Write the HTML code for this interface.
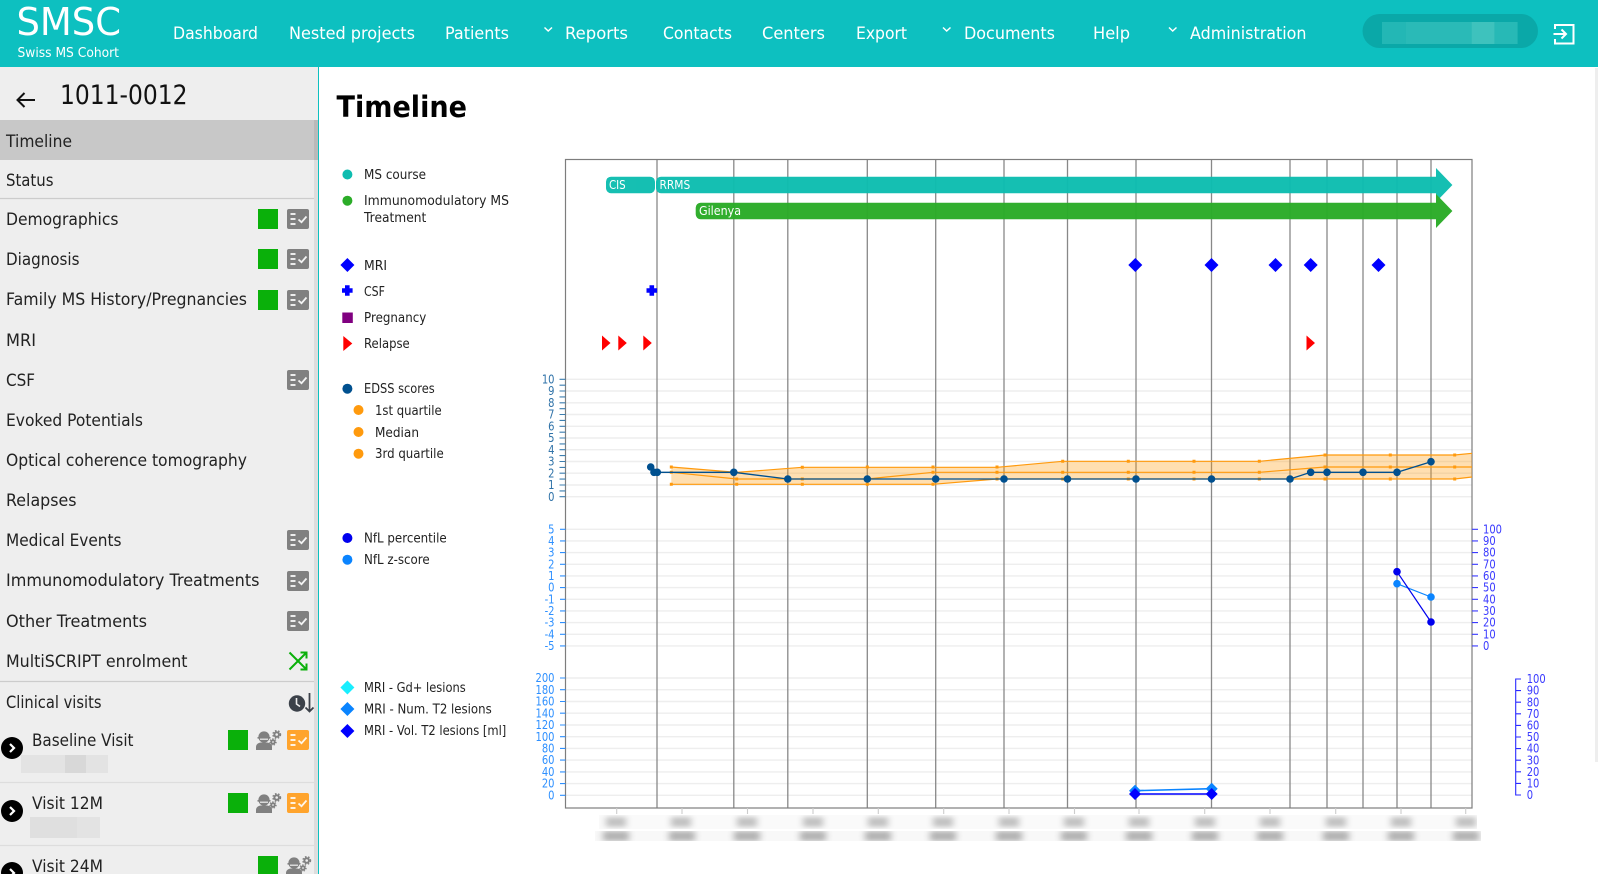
<!DOCTYPE html>
<html lang="en">
<head>
<meta charset="utf-8">
<title>SMSC Timeline</title>
<style>
html,body{margin:0;padding:0;width:1598px;height:874px;overflow:hidden;background:#fff;font-family:"DejaVu Sans","Liberation Sans",sans-serif}
header{position:absolute;left:0;top:0;width:1598px;height:67px;background:#0dc0c0}
aside{position:absolute;left:0;top:67px;width:318px;height:807px;background:#eee;border-right:1.5px solid #0dc0c0}
main{position:absolute;left:0;top:0;width:1598px;height:874px}
svg{position:absolute;left:0;top:0;overflow:visible}
.thumb{position:absolute;left:1595px;top:68px;width:3px;height:694px;background:#eee}
</style>
</head>
<body>
<main>
<svg width="1598" height="874" viewBox="0 0 1598 874" font-family="'DejaVu Sans','Liberation Sans',sans-serif">
<defs>
<filter id="b" x="-20%" y="-100%" width="140%" height="300%"><feGaussianBlur stdDeviation="3.5 2.5"/></filter>
<clipPath id="r1"><rect x="599" y="815" width="878" height="14"/></clipPath>
<clipPath id="r2"><rect x="595" y="831" width="886" height="10"/></clipPath>
</defs>
<text x="336.500" y="117" font-size="29.500" font-weight="700" fill="#000" textLength="130.500" lengthAdjust="spacingAndGlyphs">Timeline</text>

<!-- legend -->
<g font-size="13" fill="#222">
<circle cx="347.400" cy="174.500" r="5" fill="#0ebdb0"/><text x="364" y="179" textLength="62" lengthAdjust="spacingAndGlyphs">MS course</text>
<circle cx="347.400" cy="200.700" r="5" fill="#2bac28"/><text x="364" y="205" textLength="145" lengthAdjust="spacingAndGlyphs">Immunomodulatory MS</text><text x="364" y="222" textLength="62.300" lengthAdjust="spacingAndGlyphs">Treatment</text>
<path d="M347.400 258l7 7-7 7-7-7z" fill="#00f"/><text x="364" y="270" textLength="23" lengthAdjust="spacingAndGlyphs">MRI</text>
<path d="M345 285.500h4.600v3h3v4.600h-3v3H345v-3h-3v-4.600h3z" fill="#00f" transform="translate(0 -0.300)"/><text x="364" y="296" textLength="21" lengthAdjust="spacingAndGlyphs">CSF</text>
<rect x="342.300" y="312.500" width="10.500" height="10.500" fill="#800080"/><text x="364" y="322" textLength="62.300" lengthAdjust="spacingAndGlyphs">Pregnancy</text>
<path d="M343.300 336l9 7.500-9 7.500z" fill="#f00"/><text x="364" y="348" textLength="45.700" lengthAdjust="spacingAndGlyphs">Relapse</text>
<circle cx="347.400" cy="388.700" r="5" fill="#00508f"/><text x="364" y="393" textLength="70.700" lengthAdjust="spacingAndGlyphs">EDSS scores</text>
<circle cx="358.500" cy="410" r="5" fill="#ff9a0d"/><text x="375" y="415" textLength="66.700" lengthAdjust="spacingAndGlyphs">1st quartile</text>
<circle cx="358.500" cy="432" r="5" fill="#ff9a0d"/><text x="375" y="437" textLength="44" lengthAdjust="spacingAndGlyphs">Median</text>
<circle cx="358.500" cy="453.700" r="5" fill="#ff9a0d"/><text x="375" y="458" textLength="68.700" lengthAdjust="spacingAndGlyphs">3rd quartile</text>
<circle cx="347.400" cy="538" r="5" fill="#0000ee"/><text x="364" y="542.500" textLength="82.700" lengthAdjust="spacingAndGlyphs">NfL percentile</text>
<circle cx="347.400" cy="559.700" r="5" fill="#0a84ff"/><text x="364" y="564" textLength="65.700" lengthAdjust="spacingAndGlyphs">NfL z-score</text>
<path d="M347.400 680.500l7 7-7 7-7-7z" fill="#19eeff"/><text x="364" y="692" textLength="101.700" lengthAdjust="spacingAndGlyphs">MRI - Gd+ lesions</text>
<path d="M347.400 702l7 7-7 7-7-7z" fill="#0a84ff"/><text x="364" y="713.700" textLength="127.700" lengthAdjust="spacingAndGlyphs">MRI - Num. T2 lesions</text>
<path d="M347.400 724l7 7-7 7-7-7z" fill="#00f"/><text x="364" y="735" textLength="142.300" lengthAdjust="spacingAndGlyphs">MRI - Vol. T2 lesions [ml]</text>
</g>

<!-- gridlines -->
<g stroke="#eee" stroke-width="1.400">
<path d="M566 379.300H1472M566 391H1472M566 402.800H1472M566 414.500H1472M566 426.300H1472M566 438H1472M566 449.700H1472M566 461.500H1472M566 473.200H1472M566 485H1472M566 496.700H1472"/>
<path d="M566 529.300H1472M566 540.900H1472M566 552.600H1472M566 564.300H1472M566 575.900H1472M566 587.600H1472M566 599.300H1472M566 610.900H1472M566 622.600H1472M566 634.300H1472M566 645.900H1472"/>
<path d="M566 678H1472M566 689.700H1472M566 701.500H1472M566 713.200H1472M566 725H1472M566 736.700H1472M566 748.400H1472M566 760.100H1472M566 771.900H1472M566 783.600H1472M566 795.300H1472"/>
</g>

<!-- vertical lines -->
<g stroke="#888" stroke-width="1.300" fill="none">
<path d="M657 160V808M733.800 160V808M787.800 160V808M867.300 160V808M935.700 160V808M1004 160V808M1067.500 160V808M1136 160V808M1211.500 160V808M1290 160V808M1327 160V808M1363 160V808M1397 160V808M1431 160V808"/>
</g>

<!-- chart box -->
<rect x="565.500" y="159.500" width="906.500" height="648.500" fill="none" stroke="#7d7d7d" stroke-width="1.200"/>

<!-- course bars -->
<g opacity=".97">
<rect x="606" y="176.700" width="49" height="16.500" rx="5" fill="#0ebdb0"/>
<path d="M661 176.700H1436V168L1452.400 185 1436 202V193.200H661a5 5 0 0 1-5-5V181.700a5 5 0 0 1 5-5z" fill="#0ebdb0"/>
<path d="M700.700 202.700H1436V194L1452.400 211 1436 228V219.300H700.700a5 5 0 0 1-5-5V207.700a5 5 0 0 1 5-5z" fill="#2bac28"/>
</g>
<g font-size="12" fill="#fff">
<text x="609" y="189" textLength="16.700" lengthAdjust="spacingAndGlyphs">CIS</text>
<text x="659.500" y="189" textLength="30.700" lengthAdjust="spacingAndGlyphs">RRMS</text>
<text x="699" y="215" textLength="42" lengthAdjust="spacingAndGlyphs">Gilenya</text>
</g>

<!-- event markers -->
<g fill="#00f">
<path d="M1135.300 258l7 7-7 7-7-7zM1211.500 258l7 7-7 7-7-7zM1275.500 258l7 7-7 7-7-7zM1310.700 258l7 7-7 7-7-7zM1378.500 258l7 7-7 7-7-7z"/>
<path d="M649.500 285.500h4.600v3h3v4.600h-3v3h-4.600v-3h-3v-4.600h3z" transform="translate(0 -0.300)"/>
</g>
<path d="M602 335.500l8.500 7.500-8.500 7.500zM618.300 335.500l8.500 7.500-8.500 7.500zM643.300 335.500l8.500 7.500-8.500 7.500zM1306.500 335.500l8.500 7.500-8.500 7.500z" fill="#f00"/>

<!-- EDSS axis -->
<path d="M559.500 379.300H565.500M559.500 385.200H565.500M559.500 391H565.500M559.500 396.900H565.500M559.500 402.800H565.500M559.500 408.700H565.500M559.500 414.500H565.500M559.500 420.400H565.500M559.500 426.300H565.500M559.500 432.200H565.500M559.500 438H565.500M559.500 443.900H565.500M559.500 449.700H565.500M559.500 455.600H565.500M559.500 461.500H565.500M559.500 467.400H565.500M559.500 473.200H565.500M559.500 479.100H565.500M559.500 485H565.500M559.500 490.900H565.500M559.500 496.700H565.500" stroke="#3d7fb0" stroke-width="1.100"/>
<g transform="translate(554.500 -0.500) scale(.83 1)" text-anchor="end" font-size="12" fill="#2f72a8">
<text y="384">10</text><text y="395.600">9</text><text y="407.400">8</text><text y="419.100">7</text><text y="430.900">6</text><text y="442.600">5</text><text y="454.300">4</text><text y="466.100">3</text><text y="477.800">2</text><text y="489.600">1</text><text y="501.300">0</text>
</g>

<!-- NfL axes -->
<path d="M560 529.300H565.500M560 540.900H565.500M560 552.600H565.500M560 564.300H565.500M560 575.900H565.500M560 587.600H565.500M560 599.300H565.500M560 610.900H565.500M560 622.600H565.500M560 634.300H565.500M560 645.900H565.500" stroke="#2e90ff" stroke-width="1.100"/>
<g transform="translate(554.500 -0.500) scale(.83 1)" text-anchor="end" font-size="12" fill="#2e90ff">
<text y="534">5</text><text y="545.500">4</text><text y="557.200">3</text><text y="568.900">2</text><text y="580.500">1</text><text y="592.200">0</text><text y="603.900">-1</text><text y="615.500">-2</text><text y="627.200">-3</text><text y="638.900">-4</text><text y="650.500">-5</text>
</g>
<path d="M1472 529.300H1478M1472 540.900H1478M1472 552.600H1478M1472 564.300H1478M1472 575.900H1478M1472 587.600H1478M1472 599.300H1478M1472 610.900H1478M1472 622.600H1478M1472 634.300H1478M1472 645.900H1478" stroke="#3a3aff" stroke-width="1.100"/>
<g transform="translate(1483 -0.500) scale(.83 1)" font-size="12" fill="#3a3aff">
<text y="533.800">100</text><text y="545.500">90</text><text y="557.200">80</text><text y="568.900">70</text><text y="580.500">60</text><text y="592.200">50</text><text y="603.900">40</text><text y="615.500">30</text><text y="627.200">20</text><text y="638.900">10</text><text y="650.500">0</text>
</g>

<!-- MRI axes -->
<path d="M560 678H565.500M560 689.700H565.500M560 701.500H565.500M560 713.200H565.500M560 725H565.500M560 736.700H565.500M560 748.400H565.500M560 760.100H565.500M560 771.900H565.500M560 783.600H565.500M560 795.300H565.500" stroke="#2e90ff" stroke-width="1.100"/>
<g transform="translate(554.500 -0.500) scale(.83 1)" text-anchor="end" font-size="12" fill="#2e90ff">
<text y="682.600">200</text><text y="694.300">180</text><text y="706.100">160</text><text y="717.800">140</text><text y="729.600">120</text><text y="741.300">100</text><text y="753">80</text><text y="764.700">60</text><text y="776.500">40</text><text y="788.200">20</text><text y="799.900">0</text>
</g>
<path d="M1521 679H1515.700V795H1521M1515.700 690.600H1521M1515.700 702.200H1521M1515.700 713.800H1521M1515.700 725.400H1521M1515.700 737H1521M1515.700 748.600H1521M1515.700 760.200H1521M1515.700 771.800H1521M1515.700 783.400H1521" stroke="#2a2aff" stroke-width="1.100" fill="none"/>
<g transform="translate(1526.700 -0.500) scale(.83 1)" font-size="12" fill="#3a3aff">
<text y="683.600">100</text><text y="695.200">90</text><text y="706.800">80</text><text y="718.400">70</text><text y="730">60</text><text y="741.600">50</text><text y="753.200">40</text><text y="764.800">30</text><text y="776.400">20</text><text y="788">10</text><text y="799.600">0</text>
</g>

<!-- x ticks and blurred labels -->
<path d="M616.700 808v6M682 808v6M747.500 808v6M813 808v6M878.300 808v6M943.700 808v6M1009 808v6M1074.500 808v6M1139 808v6M1204.700 808v6M1270 808v6M1335.700 808v6M1401 808v6M1465.700 808v6" stroke="#ccc" stroke-width="1.100"/>
<rect x="599" y="815" width="878" height="14" fill="#fafafa"/>
<rect x="595" y="831" width="886" height="10" fill="#f8f8f8"/>
<g clip-path="url(#r1)"><g filter="url(#b)" fill="#c2c2c2">
<rect x="606" y="817" width="20" height="10"/><rect x="671" y="817" width="20" height="10"/><rect x="737" y="817" width="20" height="10"/><rect x="803" y="817" width="20" height="10"/><rect x="868" y="817" width="20" height="10"/><rect x="933" y="817" width="20" height="10"/><rect x="999" y="817" width="20" height="10"/><rect x="1064" y="817" width="20" height="10"/><rect x="1129" y="817" width="20" height="10"/><rect x="1195" y="817" width="20" height="10"/><rect x="1260" y="817" width="20" height="10"/><rect x="1326" y="817" width="20" height="10"/><rect x="1391" y="817" width="20" height="10"/><rect x="1456" y="817" width="20" height="10"/>
</g></g>
<g clip-path="url(#r2)"><g filter="url(#b)" fill="#b4b4b4">
<rect x="603" y="831" width="26" height="10"/><rect x="669" y="831" width="26" height="10"/><rect x="734" y="831" width="26" height="10"/><rect x="800" y="831" width="26" height="10"/><rect x="865" y="831" width="26" height="10"/><rect x="930" y="831" width="26" height="10"/><rect x="996" y="831" width="26" height="10"/><rect x="1061" y="831" width="26" height="10"/><rect x="1126" y="831" width="26" height="10"/><rect x="1192" y="831" width="26" height="10"/><rect x="1257" y="831" width="26" height="10"/><rect x="1323" y="831" width="26" height="10"/><rect x="1388" y="831" width="26" height="10"/><rect x="1453" y="831" width="26" height="10"/>
</g></g>

<!-- quartile band -->
<path d="M671.300 467L736.700 472.400 802.300 467.300H997L1062.700 461.300H1259.300L1325 455H1454.700L1472 453.300V477L1454.700 479H997L933 484.300H671.300Z" fill="#ff9a0d" fill-opacity=".32"/>
<g fill="none" stroke="#ff9a0d" stroke-width="1.200">
<path d="M671.300 467L736.700 472.400 802.300 467.300H997L1062.700 461.300H1259.300L1325 455H1454.700L1472 453.300"/>
<path d="M671.300 472.300L736.700 479H867L933 472.300H1259.300L1325 467H1472"/>
<path d="M671.300 484.300H933L997 479H1454.700L1472 477"/>
</g>
<g fill="#ff9a0d">
<path d="M669.800 465.500h3v3h-3zM669.800 470.800h3v3h-3zM669.800 482.800h3v3h-3zM735.200 477.500h3v3h-3zM735.200 482.800h3v3h-3zM800.800 465.800h3v3h-3zM800.800 477.500h3v3h-3zM800.800 482.800h3v3h-3zM865.800 465.500h3v3h-3zM865.800 477.500h3v3h-3zM865.800 482.800h3v3h-3zM931.500 465.500h3v3h-3zM931.500 470.800h3v3h-3zM931.500 482.800h3v3h-3zM995.500 465.500h3v3h-3zM995.500 470.800h3v3h-3zM995.500 477.500h3v3h-3zM1061.200 459.800h3v3h-3zM1061.200 470.800h3v3h-3zM1061.200 477.500h3v3h-3zM1126.800 459.800h3v3h-3zM1126.800 470.800h3v3h-3zM1126.800 477.500h3v3h-3zM1192.500 459.800h3v3h-3zM1192.500 470.800h3v3h-3zM1192.500 477.500h3v3h-3zM1257.800 459.800h3v3h-3zM1257.800 470.800h3v3h-3zM1257.800 477.500h3v3h-3zM1323.500 453.500h3v3h-3zM1323.500 465.500h3v3h-3zM1323.500 477.500h3v3h-3zM1388.800 453.500h3v3h-3zM1388.800 465.500h3v3h-3zM1388.800 477.500h3v3h-3zM1453.200 453.500h3v3h-3zM1453.200 465.500h3v3h-3zM1453.200 477.500h3v3h-3z"/>
</g>

<!-- EDSS line -->
<path d="M650.700 467L654 472.300H733.800L787.800 479H1290L1310.700 472.300H1397L1431 461.700" fill="none" stroke="#00508f" stroke-width="1.300"/>
<g fill="#00508f">
<circle cx="650.700" cy="467" r="3.800"/><circle cx="654" cy="472.300" r="3.800"/><circle cx="657.300" cy="472.300" r="3.800"/><circle cx="733.800" cy="472.300" r="3.800"/><circle cx="787.800" cy="479" r="3.800"/><circle cx="867.300" cy="479" r="3.800"/><circle cx="935.700" cy="479" r="3.800"/><circle cx="1004" cy="479" r="3.800"/><circle cx="1067.500" cy="479" r="3.800"/><circle cx="1136" cy="479" r="3.800"/><circle cx="1211.500" cy="479" r="3.800"/><circle cx="1290" cy="479" r="3.800"/><circle cx="1310.700" cy="472.300" r="3.800"/><circle cx="1327" cy="472.300" r="3.800"/><circle cx="1363" cy="472.300" r="3.800"/><circle cx="1397" cy="472.300" r="3.800"/><circle cx="1431" cy="461.700" r="3.800"/>
</g>

<!-- NfL series -->
<path d="M1397 583.700L1431 597" fill="none" stroke="#0a84ff" stroke-width="1.200"/>
<path d="M1397 571.700L1431 622" fill="none" stroke="#0000ee" stroke-width="1.200"/>
<circle cx="1397" cy="583.700" r="3.800" fill="#0a84ff"/><circle cx="1431" cy="597" r="3.800" fill="#0a84ff"/>
<circle cx="1397" cy="571.700" r="3.800" fill="#0000ee"/><circle cx="1431" cy="622" r="3.800" fill="#0000ee"/>

<!-- MRI series -->
<path d="M1135 790.700L1211.700 788.700" stroke="#0a84ff" stroke-width="1.600" fill="none"/>
<path d="M1135 794H1211.700" stroke="#00f" stroke-width="1.600" fill="none"/>
<path d="M1135 784.700l6 6-6 6-6-6zM1211.700 782.700l6 6-6 6-6-6z" fill="#0a84ff"/>
<path d="M1135 788l6 6-6 6-6-6zM1211.700 788l6 6-6 6-6-6z" fill="#00f"/>
</svg>
<div class="thumb"></div>
</main>

<header>
<svg width="1598" height="67" viewBox="0 0 1598 67" font-family="'DejaVu Sans','Liberation Sans',sans-serif" fill="#fff">
<text x="16.500" y="35" font-size="38.500" textLength="104.500" lengthAdjust="spacingAndGlyphs">SMSC</text>
<text x="17.500" y="57" font-size="13.700" textLength="101.500" lengthAdjust="spacingAndGlyphs">Swiss MS Cohort</text>
<g font-size="17.300">
<text x="173" y="39" textLength="85" lengthAdjust="spacingAndGlyphs">Dashboard</text>
<text x="289" y="39" textLength="126" lengthAdjust="spacingAndGlyphs">Nested projects</text>
<text x="445" y="39" textLength="64" lengthAdjust="spacingAndGlyphs">Patients</text>
<text x="565" y="39" textLength="63" lengthAdjust="spacingAndGlyphs">Reports</text>
<text x="663" y="39" textLength="69" lengthAdjust="spacingAndGlyphs">Contacts</text>
<text x="762" y="39" textLength="63" lengthAdjust="spacingAndGlyphs">Centers</text>
<text x="856" y="39" textLength="51" lengthAdjust="spacingAndGlyphs">Export</text>
<text x="964" y="39" textLength="91" lengthAdjust="spacingAndGlyphs">Documents</text>
<text x="1093" y="39" textLength="37" lengthAdjust="spacingAndGlyphs">Help</text>
<text x="1190" y="39" textLength="116.500" lengthAdjust="spacingAndGlyphs">Administration</text>
</g>
<path d="M544.500 27.500L548.200 31 552 27.500M943 27.500L946.700 31 950.500 27.500M1169 27.500L1172.700 31 1176.500 27.500" fill="none" stroke="#fff" stroke-width="1.500"/>
<rect x="1362.500" y="14" width="175.500" height="34" rx="17" fill="#0aa8a8"/>
<rect x="1382" y="22" width="23.600" height="22" fill="#23b7b5"/>
<rect x="1405.600" y="22" width="66" height="22" fill="#2abab7"/>
<rect x="1471.600" y="22" width="23" height="22" fill="#3ec2bd"/>
<rect x="1494.600" y="22" width="23" height="22" fill="#27b9b6"/>
<path d="M1555 29V25h18.500v18.500H1555V39" fill="none" stroke="#fff" stroke-width="2"/>
<path d="M1553.500 34H1566M1561.500 29.500L1566 34 1561.500 38.500" fill="none" stroke="#fff" stroke-width="2"/>
</svg>
</header>

<aside>
<svg width="318" height="807" viewBox="0 67 318 807" font-family="'DejaVu Sans','Liberation Sans',sans-serif" fill="#222">
<defs>
<g id="chk">
<rect width="22" height="20" rx="2"/>
<path d="M3.500 5h5M3.500 10h5M3.500 15h5" stroke="#fff" stroke-opacity=".85" stroke-width="2" fill="none"/>
<path d="M11.500 10.500l3 2.700 5-5.700" stroke="#fff" stroke-opacity=".9" stroke-width="1.800" fill="none"/>
</g>
<g id="worker" fill="#808080">
<circle cx="8" cy="6" r="5.600"/>
<rect x="1.500" y="6" width="13" height="1.600"/>
<path d="M4 8.200h8" stroke="#eee" stroke-width="1.200"/>
<path d="M0 19v-3c0-2.700 2.500-4.500 5-4.500h6c2.500 0 5 1.800 5 4.500v3z"/>
<circle cx="20.700" cy="3.500" r="2.300" fill="none" stroke="#808080" stroke-width="2"/>
<circle cx="20.700" cy="3.500" r="3.800" fill="none" stroke="#808080" stroke-width="1.400" stroke-dasharray="1.600 1.600"/>
<circle cx="17" cy="11" r="1.800" fill="none" stroke="#808080" stroke-width="1.800"/>
<circle cx="17" cy="11" r="3.100" fill="none" stroke="#808080" stroke-width="1.200" stroke-dasharray="1.300 1.400"/>
</g>
<g id="go">
<circle r="11" fill="#000"/>
<path d="M-2 -4l4 4-4 4" fill="none" stroke="#fff" stroke-width="2.200"/>
</g>
</defs>
<path d="M35 100H17.500M24.500 93L17.500 100 24.500 107" fill="none" stroke="#111" stroke-width="2"/>
<text x="60" y="104" font-size="26.800" textLength="127.500" lengthAdjust="spacingAndGlyphs" fill="#111">1011-0012</text>

<rect x="0" y="120" width="318" height="40" fill="#c8c8c8"/>
<rect x="314" y="120" width="3.800" height="754" fill="#000" fill-opacity=".07"/>
<path d="M0 198.500H314M0 681.500H314" stroke="#ccc" stroke-width="1.200"/>
<path d="M0 782.500H314M0 845.500H314" stroke="#ddd" stroke-width="1.200"/>

<g font-size="17.300">
<text x="6" y="147" textLength="66" lengthAdjust="spacingAndGlyphs">Timeline</text>
<text x="6" y="186" textLength="47.500" lengthAdjust="spacingAndGlyphs">Status</text>
<text x="6" y="225" textLength="112.500" lengthAdjust="spacingAndGlyphs">Demographics</text>
<text x="6" y="265" textLength="73.500" lengthAdjust="spacingAndGlyphs">Diagnosis</text>
<text x="6" y="305" textLength="241" lengthAdjust="spacingAndGlyphs">Family MS History/Pregnancies</text>
<text x="6" y="346" textLength="30" lengthAdjust="spacingAndGlyphs">MRI</text>
<text x="6" y="386" textLength="29" lengthAdjust="spacingAndGlyphs">CSF</text>
<text x="6" y="426" textLength="137" lengthAdjust="spacingAndGlyphs">Evoked Potentials</text>
<text x="6" y="466" textLength="241" lengthAdjust="spacingAndGlyphs">Optical coherence tomography</text>
<text x="6" y="506" textLength="70.500" lengthAdjust="spacingAndGlyphs">Relapses</text>
<text x="6" y="546" textLength="115.500" lengthAdjust="spacingAndGlyphs">Medical Events</text>
<text x="6" y="586" textLength="253.500" lengthAdjust="spacingAndGlyphs">Immunomodulatory Treatments</text>
<text x="6" y="627" textLength="141" lengthAdjust="spacingAndGlyphs">Other Treatments</text>
<text x="6" y="667" textLength="181.500" lengthAdjust="spacingAndGlyphs">MultiSCRIPT enrolment</text>
<text x="6" y="708" textLength="95.500" lengthAdjust="spacingAndGlyphs">Clinical visits</text>
<text x="32" y="746" textLength="101.500" lengthAdjust="spacingAndGlyphs">Baseline Visit</text>
<text x="32" y="809" textLength="71" lengthAdjust="spacingAndGlyphs">Visit 12M</text>
<text x="32" y="872" textLength="71" lengthAdjust="spacingAndGlyphs">Visit 24M</text>
</g>

<g fill="#0ab00a">
<rect x="258" y="209" width="20" height="20"/>
<rect x="258" y="249" width="20" height="20"/>
<rect x="258" y="290" width="20" height="20"/>
<rect x="228" y="730" width="20" height="20"/>
<rect x="228" y="793" width="20" height="20"/>
<rect x="258" y="856" width="20" height="20"/>
</g>
<g fill="#808080">
<use href="#chk" x="287" y="209"/>
<use href="#chk" x="287" y="249"/>
<use href="#chk" x="287" y="290"/>
<use href="#chk" x="287" y="370"/>
<use href="#chk" x="287" y="530"/>
<use href="#chk" x="287" y="571"/>
<use href="#chk" x="287" y="611"/>
</g>
<g fill="#ffa42d">
<use href="#chk" x="287" y="730"/>
<use href="#chk" x="287" y="793"/>
</g>
<use href="#worker" x="256" y="731"/>
<use href="#worker" x="256" y="794"/>
<use href="#worker" x="286" y="857"/>
<use href="#go" x="12" y="748"/>
<use href="#go" x="12" y="811"/>
<use href="#go" x="12" y="873"/>

<!-- shuffle icon -->
<g fill="none" stroke="#0ab00a" stroke-width="2">
<path d="M289.500 652.500L306 669M289.500 669.500L306 653"/>
<path d="M300.500 652.500H306.500V658.500M306.500 663.500V669.500H300.500"/>
</g>
<!-- clock sort icon -->
<circle cx="297" cy="703.500" r="8.200" fill="#3b4149"/>
<path d="M296.500 698v6l3.500 2.500" fill="none" stroke="#eee" stroke-width="1.600"/>
<path d="M309.500 693V711M305.500 707.500L309.500 711.500 313.500 707.500" fill="none" stroke="#3b4149" stroke-width="1.800"/>

<!-- redacted dates -->
<rect x="21" y="755" width="87" height="18" fill="#e3e3e3"/>
<rect x="65" y="755" width="21" height="18" fill="#d8d8d8"/>
<rect x="30" y="817" width="47" height="21" fill="#dfdfdf"/>
<rect x="77" y="817" width="23" height="21" fill="#e3e3e3"/>
</svg>
</aside>
</body>
</html>
